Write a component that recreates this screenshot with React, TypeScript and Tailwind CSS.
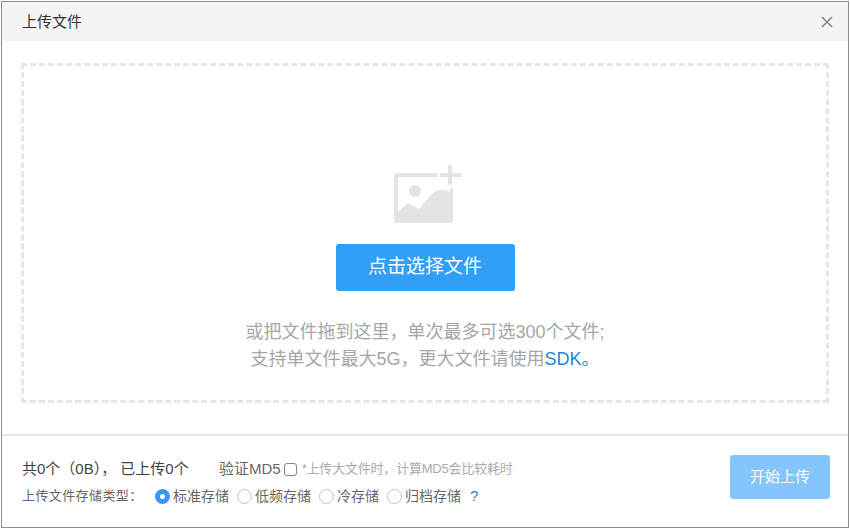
const FONT = "font-['Liberation_Sans','Noto_Sans_CJK_SC',sans-serif]";

function Radio({ label, checked }: { label: string; checked?: boolean }) {
  return (
    <span className="flex items-center">
      {checked ? (
        <span className="flex h-[15px] w-[15px] items-center justify-center rounded-full bg-[#3b97f5]">
          <span className="h-[5px] w-[5px] rounded-full bg-white" />
        </span>
      ) : (
        <span className="h-[15px] w-[15px] rounded-full border border-[#c4c4c4] bg-white" />
      )}
      <span className="ml-[3px] text-[14px] leading-[20px] text-[#666]">{label}</span>
    </span>
  );
}

export default function App() {
  return (
    <div className={`${FONT} h-[529px] w-[850px] bg-white`}>
      <div className="mx-[1px] mt-[1px] flex h-[527px] w-[848px] flex-col border border-[#8c8c8c]">
        <header className="flex h-[39px] shrink-0 items-center justify-between bg-[#f4f4f4] pl-[20px] pr-[15px]">
          <span className="text-[15px] leading-[36px] text-[#333]">上传文件</span>
          <svg width="12" height="12" viewBox="0 0 12 12" className="text-[#8a8a8a]">
            <path d="M1 1l10 10M11 1L1 11" stroke="currentColor" strokeWidth="1.7" fill="none" />
          </svg>
        </header>

        <div className="px-[19px] pt-[22px]">
          <div className="flex h-[340px] flex-col items-center border-[3px] border-dashed border-[#e6e6e6] pt-[99px]">
            <svg width="68" height="58" viewBox="0 0 68 58" className="ml-[6px]">
              <path
                d="M3 8H44V12H5a1 1 0 0 0-1 1V47L14 38L25 44C32 36 38 26 46 25C50 24.5 53 25 56 27V23H59V55a3 3 0 0 1-3 3H3a3 3 0 0 1-3-3V11a3 3 0 0 1 3-3z"
                fill="#e4e4e4"
              />
              <circle cx="21" cy="26" r="6" fill="#e4e4e4" />
              <path d="M46 10H68M56 0V20" stroke="#e4e4e4" strokeWidth="4" fill="none" />
            </svg>
            <button className="mt-[21px] h-[47px] w-[179px] rounded-[3px] bg-[#319ef8] text-[19px] text-white">
              点击选择文件
            </button>
            <p className="mt-[28px] text-center text-[18px] leading-[27px] text-[#a6a6a6]">
              或把文件拖到这里，单次最多可选300个文件;
              <br />
              支持单文件最大5G，更大文件请使用<span className="text-[#1f87d8]">SDK。</span>
            </p>
          </div>
        </div>

        <footer className="mt-[31px] flex flex-1 items-start justify-between border-t-2 border-[#e8e8e8] pl-[20px] pr-[18px]">
          <div className="pt-[22px]">
            <div className="flex h-[22px] items-center">
              <span className="w-[197px] text-[15px] text-[#444]">共0个（0B）， 已上传0个</span>
              <span className="text-[15px] text-[#666]">验证MD5</span>
              <span className="ml-[3px] h-[13px] w-[13px] rounded-[3px] border border-[#888] bg-white" />
              <span className="ml-[5px] text-[13px] tracking-[-0.2px] text-[#aaa]">*上传大文件时，计算MD5会比较耗时</span>
            </div>
            <div className="mt-[5px] flex h-[22px] items-center">
              <span className="w-[133px] text-[13px] tracking-[0.4px] text-[#666]">上传文件存储类型：</span>
              <div className="flex gap-[8px]">
                <Radio label="标准存储" checked />
                <Radio label="低频存储" />
                <Radio label="冷存储" />
                <Radio label="归档存储" />
              </div>
              <span className="ml-[9px] text-[15px] text-[#1f87d8]">?</span>
            </div>
          </div>
          <button className="mt-[19px] h-[44px] w-[100px] rounded-[3px] bg-[#84c5fb] text-[15px] text-white">
            开始上传
          </button>
        </footer>
      </div>
    </div>
  );
}
